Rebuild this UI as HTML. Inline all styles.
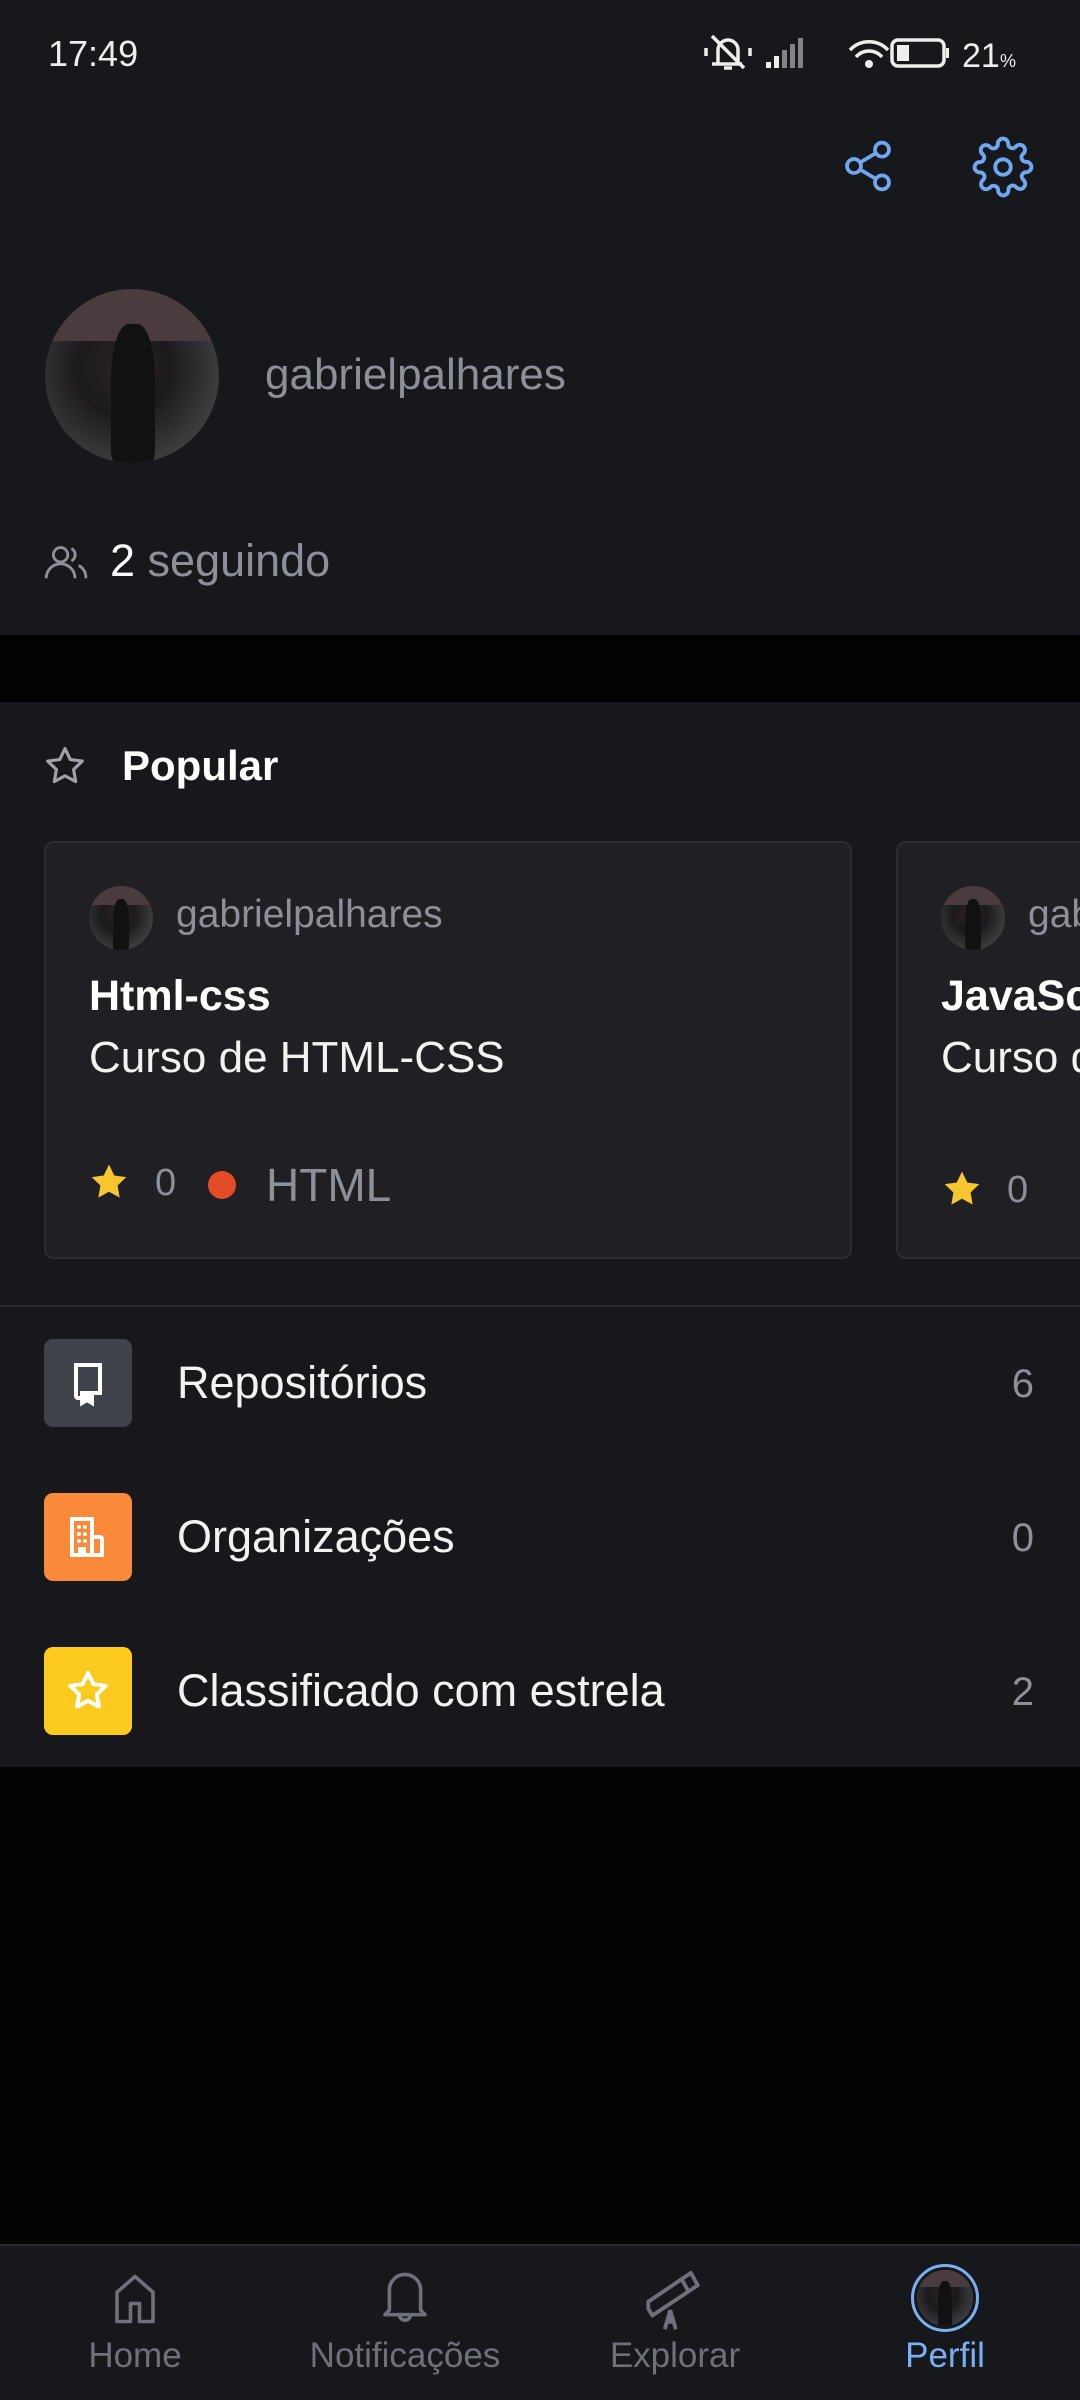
<!DOCTYPE html>
<html><head><meta charset="utf-8"><style>
*{margin:0;padding:0;box-sizing:border-box}
body{width:1080px;height:2400px;background:#020202;font-family:"Liberation Sans",sans-serif;position:relative;overflow:hidden;color:#fff}
.abs{position:absolute;white-space:nowrap}
.hdr{left:0;top:0;width:1080px;height:635px;background:#17181c}
.sec{left:0;top:702px;width:1080px;height:1065px;background:#17181c}
.av{border-radius:50%;background:radial-gradient(circle at 45% 45%,#2a2326 0%,#1c1a1c 35%,#3a3b3d 70%,#555 100%);overflow:hidden}
.av:before{content:"";position:absolute;left:0;top:0;width:100%;height:30%;background:#4a3c3e}
.av:after{content:"";position:absolute;left:38%;top:20%;width:25%;height:80%;background:#111;border-radius:40% 40% 10% 10%}
.card{top:841px;height:418px;background:#1f1f24;border:2px solid #2c2d32;border-radius:10px}
.grey{color:#8d9099}
.ico{left:44px;width:88px;height:88px;border-radius:9px}
.lbl{left:177px;font-size:45px;color:#f2f2f2}
.cnt{right:46px;font-size:40px;color:#8d9099}
.nav{left:0;top:2244px;width:1080px;height:156px;background:#17181c;border-top:2px solid #2a2b30}
.nl{font-size:35px;color:#6f717a;top:2336px;text-align:center;width:260px}
.clip{left:0;top:0;width:1080px;height:2400px;overflow:hidden}
</style></head><body>
<div class="abs clip">
<div class="abs hdr"></div>
<div class="abs" style="left:48px;top:33px;font-size:36px;color:#eee">17:49</div>
<svg class="abs" style="left:700px;top:30px" width="330" height="46" viewBox="0 0 330 46">
<g fill="none" stroke="#eee" stroke-width="3.5">
<path d="M18 34V20a10 10 0 0 1 20 0v14h4H12zM24 38h8M12 6l32 32M6 18v8M50 18v8"/>
<path d="M150 20a26 26 0 0 1 38 0M156 27a17 17 0 0 1 26 0"/>
<rect x="192" y="10" width="52" height="26" rx="6"/>
</g>
<g fill="#eee"><rect x="66" y="32" width="5" height="6"/><rect x="74" y="26" width="5" height="12"/><rect x="82" y="20" width="5" height="18" opacity=".5"/><rect x="90" y="14" width="5" height="24" opacity=".5"/><rect x="98" y="8" width="5" height="30" opacity=".5"/>
<circle cx="169" cy="34" r="4"/><rect x="197" y="15" width="12" height="16"/><rect x="246" y="18" width="3" height="10"/></g>
<text x="262" y="37" font-size="34" fill="#eee" font-family="Liberation Sans">21</text><text x="300" y="37" font-size="18" fill="#eee" font-family="Liberation Sans">%</text>
</svg>
<svg class="abs" style="left:840px;top:138px" width="56" height="56" viewBox="0 0 24 24" fill="none" stroke="#6fa8f0" stroke-width="1.6"><circle cx="18" cy="5" r="3"/><circle cx="6" cy="12" r="3"/><circle cx="18" cy="19" r="3"/><path d="M8.6 13.5l6.8 4M15.4 6.5l-6.8 4"/></svg>
<svg class="abs" style="left:972px;top:136px" width="62" height="62" viewBox="0 0 24 24" fill="none" stroke="#6fa8f0" stroke-width="1.5"><circle cx="12" cy="12" r="3"/><path d="M19.4 15a1.7 1.7 0 0 0 .3 1.8l.1.1a2 2 0 1 1-2.8 2.8l-.1-.1a1.7 1.7 0 0 0-1.8-.3 1.7 1.7 0 0 0-1 1.5V21a2 2 0 1 1-4 0v-.1a1.7 1.7 0 0 0-1.1-1.5 1.7 1.7 0 0 0-1.8.3l-.1.1a2 2 0 1 1-2.8-2.8l.1-.1a1.7 1.7 0 0 0 .3-1.8 1.7 1.7 0 0 0-1.5-1H3a2 2 0 1 1 0-4h.1a1.7 1.7 0 0 0 1.5-1.100 1.7 1.7 0 0 0-.3-1.8l-.1-.1a2 2 0 1 1 2.8-2.8l.1.1a1.7 1.7 0 0 0 1.8.3H9a1.7 1.7 0 0 0 1-1.5V3a2 2 0 1 1 4 0v.1a1.7 1.7 0 0 0 1 1.5 1.7 1.7 0 0 0 1.8-.3l.1-.1a2 2 0 1 1 2.8 2.8l-.1.1a1.7 1.7 0 0 0-.3 1.8V9a1.7 1.7 0 0 0 1.5 1H21a2 2 0 1 1 0 4h-.1a1.7 1.7 0 0 0-1.5 1z"/></svg>
<div class="abs av" style="left:45px;top:289px;width:174px;height:174px"></div>
<div class="abs grey" style="left:265px;top:350px;font-size:44px">gabrielpalhares</div>
<svg class="abs" style="left:44px;top:544px" width="44" height="36" viewBox="0 0 24 20" fill="none" stroke="#8d9099" stroke-width="1.6"><circle cx="9" cy="6" r="4"/><path d="M1 19a8 8 0 0 1 16 0M15 2.5a4 4 0 0 1 0 7M19 12a7 7 0 0 1 4 7"/></svg>
<div class="abs" style="left:110px;top:535px;font-size:45px"><span style="color:#fff">2</span> <span class="grey">seguindo</span></div>

<div class="abs sec"></div>
<svg class="abs" style="left:44px;top:745px" width="42" height="42" viewBox="0 0 24 24" fill="none" stroke="#a0a2aa" stroke-width="1.8" stroke-linejoin="round"><path d="M12 2l3 6.3 6.9.9-5 4.8 1.2 6.9L12 17.6 5.9 20.9 7.1 14l-5-4.8 6.9-.9z"/></svg>
<div class="abs" style="left:122px;top:742px;font-size:42px;font-weight:bold">Popular</div>

<div class="abs card" style="left:44px;width:808px"></div>
<div class="abs card" style="left:896px;width:220px"></div>
<div class="abs av" style="left:89px;top:886px;width:64px;height:64px"></div>
<div class="abs av" style="left:941px;top:886px;width:64px;height:64px"></div>
<div class="abs grey" style="left:176px;top:893px;font-size:39px">gabrielpalhares</div>
<div class="abs grey" style="left:1028px;top:893px;font-size:39px">gabrielpalhares</div>
<div class="abs" style="left:89px;top:972px;font-size:43px;font-weight:bold">Html-css</div>
<div class="abs" style="left:941px;top:972px;font-size:43px;font-weight:bold">JavaScript</div>
<div class="abs" style="left:89px;top:1033px;font-size:44px;color:#f2f2f2">Curso de HTML-CSS</div>
<div class="abs" style="left:941px;top:1033px;font-size:44px;color:#f2f2f2">Curso de JavaScript</div>
<svg class="abs" style="left:88px;top:1161px" width="42" height="42" viewBox="0 0 24 24"><path fill="#f5c630" d="M12 2l3 6.3 6.9.9-5 4.8 1.2 6.9L12 17.6 5.9 20.9 7.1 14l-5-4.8 6.9-.9z"/></svg>
<div class="abs grey" style="left:155px;top:1162px;font-size:38px">0</div>
<div class="abs" style="left:208px;top:1171px;width:28px;height:28px;border-radius:50%;background:#e34c26"></div>
<div class="abs grey" style="left:266px;top:1158px;font-size:46px">HTML</div>
<svg class="abs" style="left:941px;top:1168px" width="42" height="42" viewBox="0 0 24 24"><path fill="#f5c630" d="M12 2l3 6.3 6.9.9-5 4.8 1.2 6.9L12 17.6 5.9 20.9 7.1 14l-5-4.8 6.9-.9z"/></svg>
<div class="abs grey" style="left:1007px;top:1169px;font-size:38px">0</div>

<div class="abs" style="left:0;top:1305px;width:1080px;height:2px;background:#2a2b30"></div>

<div class="abs ico" style="top:1339px;background:#40424c"></div>
<svg class="abs" style="left:64px;top:1359px" width="48" height="48" viewBox="0 0 24 24" fill="none" stroke="#fff" stroke-width="2"><path d="M6 17V3h12v14h-3M6 17v1.5a1 1 0 0 0 1 1h1"/><path d="M9 17h5v5l-2.5-1.5L9 22z" fill="#fff"/></svg>
<div class="abs lbl" style="top:1357px">Repositórios</div>
<div class="abs cnt" style="top:1362px">6</div>

<div class="abs ico" style="top:1493px;background:#fa8a3a"></div>
<svg class="abs" style="left:64px;top:1513px" width="48" height="48" viewBox="0 0 24 24" fill="none" stroke="#fff" stroke-width="2"><path d="M4 21V3h10v18zM14 12h4a1 1 0 0 1 1 1v8h-5M8 21v-3h2v3"/><g fill="#fff" stroke="none"><circle cx="7.5" cy="7" r="1"/><circle cx="10.5" cy="7" r="1"/><circle cx="7.5" cy="10.5" r="1"/><circle cx="10.5" cy="10.5" r="1"/><circle cx="7.5" cy="14" r="1"/><circle cx="10.5" cy="14" r="1"/></g></svg>
<div class="abs lbl" style="top:1511px">Organizações</div>
<div class="abs cnt" style="top:1516px">0</div>

<div class="abs ico" style="top:1647px;background:#fccb1d"></div>
<svg class="abs" style="left:64px;top:1667px" width="48" height="48" viewBox="0 0 24 24" fill="none" stroke="#fff" stroke-width="2" stroke-linejoin="round"><path d="M12 3l2.7 5.6 6.1.8-4.4 4.3 1.1 6.1L12 16.9l-5.5 2.9 1.1-6.1-4.4-4.3 6.1-.8z"/></svg>
<div class="abs lbl" style="top:1665px">Classificado com estrela</div>
<div class="abs cnt" style="top:1670px">2</div>

<div class="abs nav"></div>
<svg class="abs" style="left:108px;top:2272px" width="54" height="54" viewBox="0 0 24 24" fill="none" stroke="#6f717a" stroke-width="1.6" stroke-linejoin="round"><path d="M4 22V9l8-7 8 7v13h-6v-8h-4v8z"/></svg>
<svg class="abs" style="left:378px;top:2270px" width="54" height="58" viewBox="0 0 24 26" fill="none" stroke="#6f717a" stroke-width="1.6" stroke-linejoin="round"><path d="M5 18V9a7 7 0 0 1 14 0v9l2 2H3zM9.5 20a2.5 2.5 0 0 0 5 0"/></svg>
<svg class="abs" style="left:640px;top:2266px" width="66" height="66" viewBox="0 0 24 24" fill="none" stroke="#6f717a" stroke-width="1.4" stroke-linejoin="round"><path d="M3 15.5l1.5 2.5L21 7l-2.5-4.5L3 13zM15 4.5l2.5 4.5M11 16l-2 7M11 16l2 7M11 16v5"/></svg>
<div class="abs" style="left:911px;top:2264px;width:68px;height:68px;border-radius:50%;border:3px solid #7ab0f2;padding:3px"><div class="av" style="position:relative;width:100%;height:100%"></div></div>
<div class="abs nl" style="left:5px">Home</div>
<div class="abs nl" style="left:275px">Notificações</div>
<div class="abs nl" style="left:545px">Explorar</div>
<div class="abs nl" style="left:815px;color:#7ab0f2">Perfil</div>
</div>
</body></html>
